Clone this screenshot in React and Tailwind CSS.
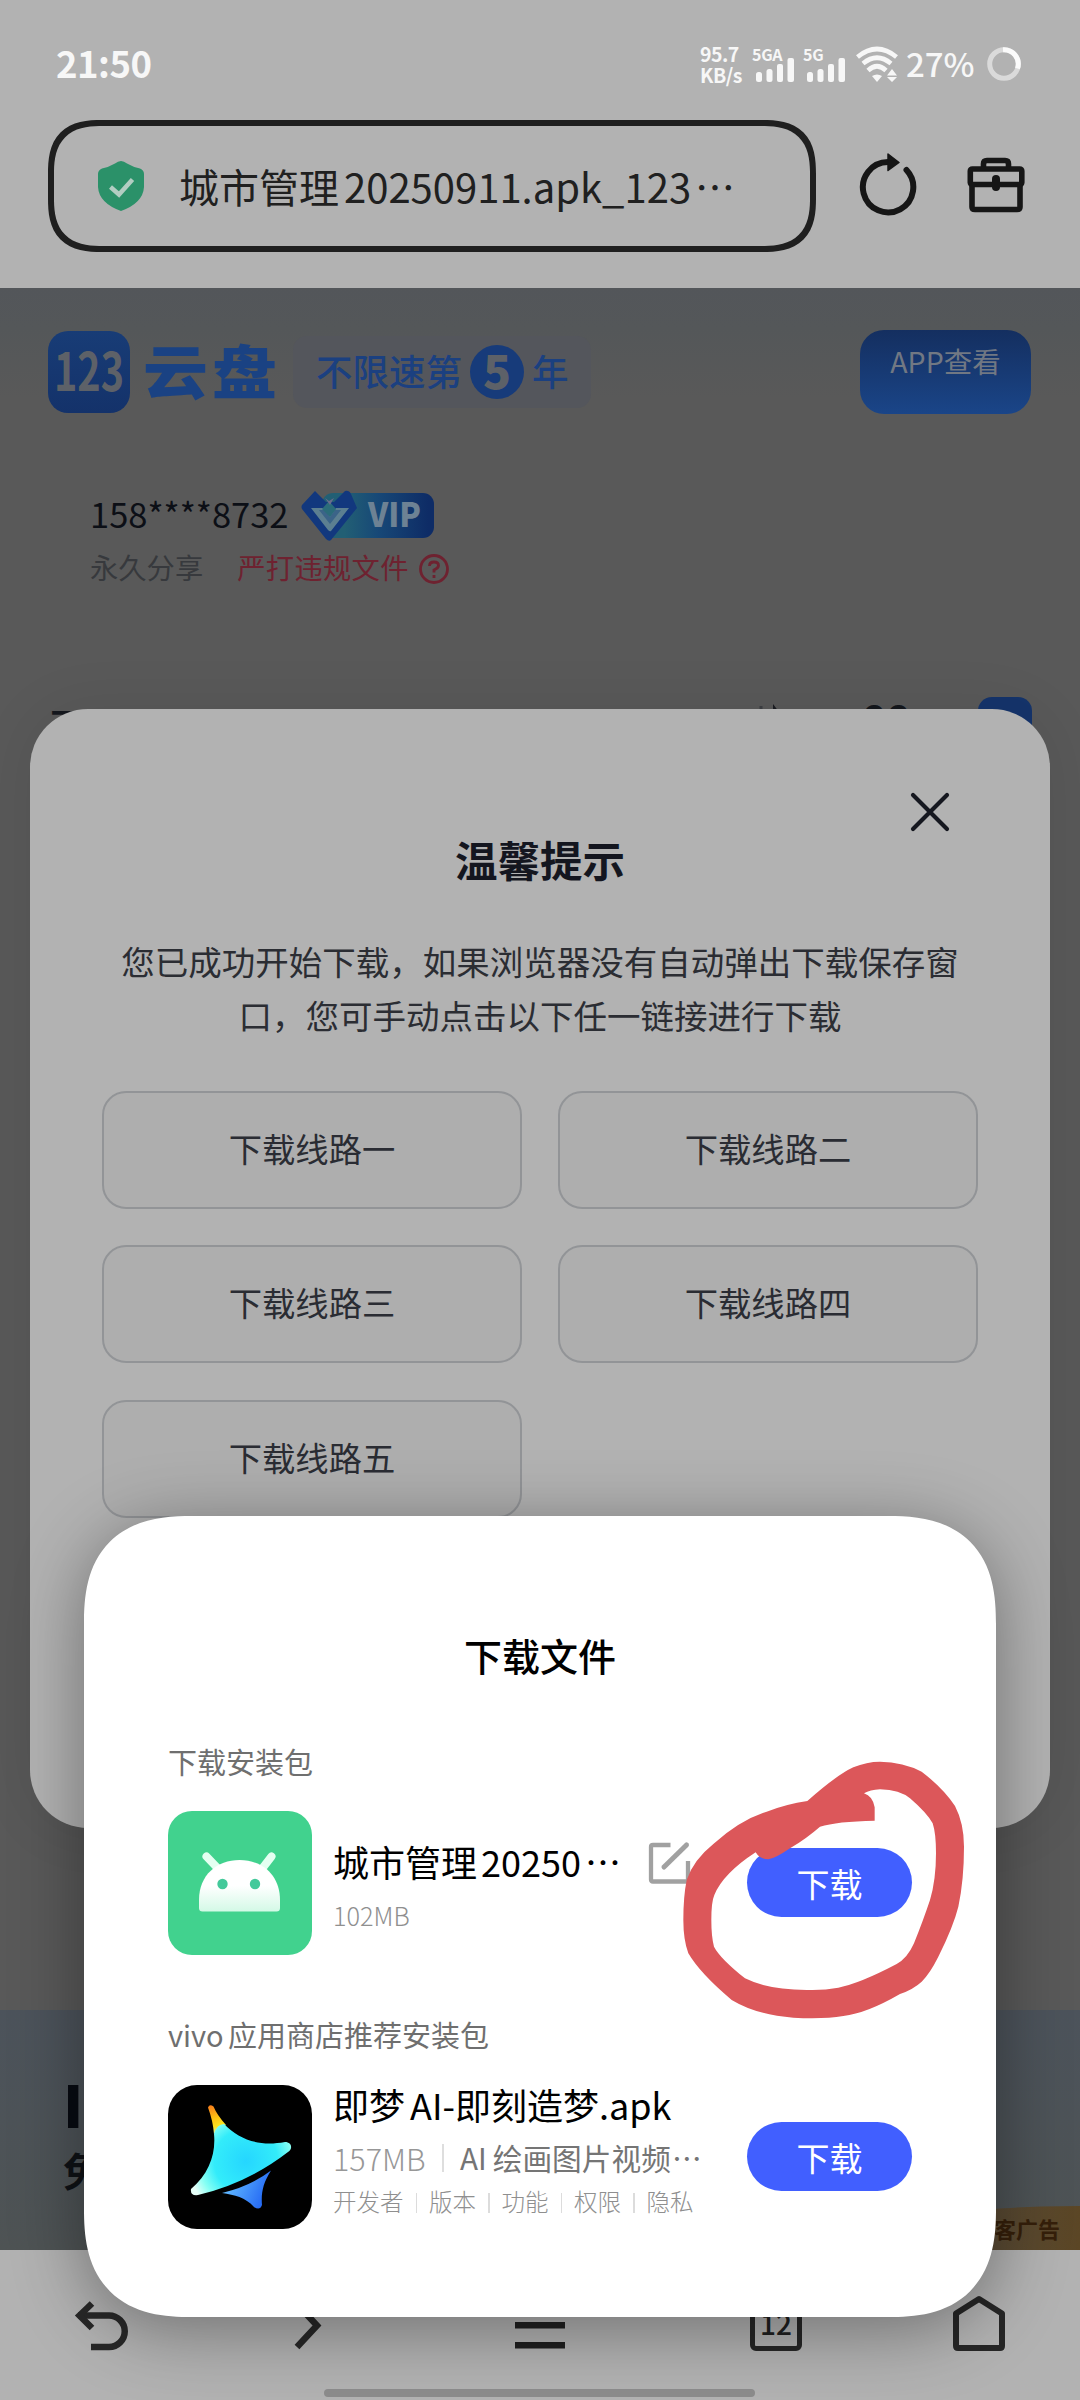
const ROUTES = ["下载线路一", "下载线路二", "下载线路三", "下载线路四", "下载线路五"];

const APP_LINKS = ["开发者", "版本", "功能", "权限", "隐私"];

function Signal({ label }) {
  return (
    <div className="w-[42px] h-[36px] relative">
      <span className="absolute -left-[2px] -top-px text-[16px] leading-[17px] font-bold tracking-[-0.3px] whitespace-nowrap">
        {label}
      </span>
      <svg className="absolute left-0 top-0" width="42" height="36" viewBox="0 0 42 36" fill="#f7f7f7">
        <rect x="2" y="25" width="6" height="10" rx="2.5" />
        <rect x="12.5" y="22" width="6" height="13" rx="2.5" />
        <rect x="23" y="17" width="6" height="18" rx="2" />
        <rect x="33.5" y="11" width="6.5" height="24" rx="2" />
      </svg>
    </div>
  );
}

function StatusBar() {
  return (
    <div className="h-[120px] pt-[42px] pl-[56px] flex items-start text-[#f7f7f7]">
      <div className="w-[644px] text-[36.500px] leading-[42px] font-bold tracking-[-0.5px]">21:50</div>
      <div className="w-[54px] text-[19.500px] leading-[21px] font-bold mt-px tracking-[-0.5px]">
        <div>95.7</div>
        <div>KB/s</div>
      </div>
      <div className="flex mt-[5px]">
        <Signal label="5GA" />
        <div className="w-[9px]" />
        <Signal label="5G" />
      </div>
      <svg className="ml-[9px] mt-[4px]" width="44" height="38" viewBox="0 0 44 38" fill="none" stroke="#f7f7f7" strokeWidth="4.6">
        <path d="M1.5 11 Q21 -5 40.500 11" />
        <path d="M7 17.500 Q21 6 35 17.500" />
        <path d="M12 24.500 Q21 16 30 24.500" />
        <path d="M16 30 Q21 27 26 30 L21 36Z" fill="#f7f7f7" stroke="none" />
        <path d="M36 23 l5 6.500 h-10z M36 36 l5 -5 h-10z" fill="#f7f7f7" stroke="none" />
      </svg>
      <div className="ml-[6px] w-[81px] text-[33px] leading-[42px] font-medium">27%</div>
      <svg className="mt-[5px]" width="34" height="34" viewBox="0 0 34 34" fill="none" strokeWidth="5">
        <circle cx="17" cy="17" r="14.300" stroke="#dadada" />
        <path d="M16 2.700 A14.300 14.300 0 0 1 30.500 21.500" stroke="#fbfbfb" />
      </svg>
    </div>
  );
}

function AddressRow() {
  return (
    <div className="h-[168px] pl-[48px] flex items-start">
      <div className="w-[768px] h-[132px] rounded-[54px] [corner-shape:superellipse(1.4)] border-6 border-[#1f1f1f] pl-[43px] flex items-center text-[#202020]">
        <svg width="48" height="52" viewBox="0 0 48 52">
          <path d="M24 1 Q27 1 30 3.500 Q36 7 43 8.500 Q47 10 47 14 V27 Q46 43 24 51 Q2 43 1 27 V14 Q1 10 5 8.500 Q12 7 18 3.500 Q21 1 24 1Z" fill="#2b9169" />
          <path d="M13.500 27 L22 34.500 L35.500 19.500" fill="none" stroke="#b2cdc2" strokeWidth="4.500" />
        </svg>
        <div className="ml-[34px] pb-px flex text-[40px] leading-[60px] whitespace-nowrap">
          <span>城市管理</span>
          <span className="ml-[5px]">20250911.apk_123</span>
          <span className="ml-[4px]">…</span>
        </div>
      </div>
      <svg className="ml-[42px] mt-[30px]" width="60" height="68" viewBox="0 0 60 68">
        <path d="M30 12 A25.200 25.200 0 1 0 48.500 20" fill="none" stroke="#161616" strokeWidth="6" strokeLinecap="round" />
        <path d="M30 4 L41 12.500 L30 20.500Z" fill="#161616" stroke="#161616" strokeWidth="1.500" strokeLinejoin="round" />
      </svg>
      <svg className="ml-[49px] mt-[36px]" width="58" height="58" viewBox="0 0 58 58" fill="none" stroke="#161616" strokeWidth="5.600" strokeLinejoin="round">
        <path d="M16.500 13 V8 Q16.500 4.500 20 4.500 H38 Q41.500 4.500 41.500 8 V13" />
        <rect x="3.300" y="13" width="51.500" height="15.500" rx="2" />
        <path d="M5 28 V51 Q5 53.500 8 53.500 H50 Q53 53.500 53 51 V28" />
        <path d="M29 23 V31" strokeWidth="8" strokeLinecap="round" />
      </svg>
    </div>
  );
}

function VipBadge() {
  return (
    <svg className="overflow-visible" width="136" height="54" viewBox="0 0 136 54">
      <defs>
        <linearGradient id="vip">
          <stop offset="0.2" stopColor="#225f74" />
          <stop offset="0.5" stopColor="#174877" />
          <stop offset="0.95" stopColor="#0e2c66" />
        </linearGradient>
      </defs>
      <rect x="22" y="4" width="112" height="45" rx="11" fill="url(#vip)" />
      <path d="M15 2 L26 13 H34 L45 2 Q49 1 51 5 L57 19 L31 51 Q29 53 26 50 L2 20 Q1 18 2 16Z" fill="#12387e" />
      <path d="M11 19 H24 L30 26 L36 19 H49 L31 42 Q30 43 28 41Z" fill="#5c7f91" />
      <path d="M19 21 H25 L30 28 L35 21 H41 L30 35Z" fill="#1a4a80" opacity=".5" />
      <path d="M22 20 L29 12 L36 20 L30 28Z" fill="#2b6c7a" />
      <path d="M25 9 L29 12 L34 9 L30 16Z" fill="#6a6c8c" />
      <text x="68" y="38" fontSize="33" fontWeight="900" fill="#6d8294" textLength="53" lengthAdjust="spacingAndGlyphs">
        VIP
      </text>
    </svg>
  );
}

function SitePage() {
  return (
    <div className="h-[1962px] flex flex-col bg-[#595959] bg-[linear-gradient(180deg,#53565a_0px,#545759_40px,#595959_110px)] overflow-hidden">
      <div className="mt-[42px] h-[84px] pl-[48px] flex items-center">
        <svg className="overflow-visible" width="82" height="82" viewBox="0 0 82 82">
          <defs>
            <linearGradient id="logo" x2="0" y2="1">
              <stop offset="0" stopColor="#183c76" />
              <stop offset="1" stopColor="#14326a" />
            </linearGradient>
          </defs>
          <rect width="82" height="82" rx="20" fill="url(#logo)" />
          <text x="6" y="60" fontSize="53" fontWeight="700" fill="#5d6168" textLength="70" lengthAdjust="spacingAndGlyphs">
            123
          </text>
        </svg>
        <div className="ml-[13px] w-[150px] text-[65px] leading-[70px] font-black tracking-[4px] text-[#1a4283] pb-[6px] scale-y-90">
          云盘
        </div>
        <div className="w-[298px] h-[72px] rounded-[14px] bg-[#54565c] pl-[23px] flex items-center text-[36.500px] leading-[60px] text-[#1b4080] font-medium whitespace-nowrap">
          <span className="pb-[2px]">不限速第</span>
          <span className="mx-[8px] size-[54px] rounded-full bg-[#173b7a] text-[#5d6168] text-[46px] leading-[49px] font-black text-center">
            5
          </span>
          <span className="pb-[2px]">年</span>
        </div>
        <div className="ml-[269px] w-[171px] h-[84px] rounded-[24px] bg-linear-to-b from-[#142f60] to-[#1a4588] text-center text-[28.500px] leading-[61px] text-[#717883]">
          APP查看
        </div>
      </div>

      <div className="mt-[73px] pl-[90px] flex items-center h-[56px]">
        <span className="text-[34.500px] leading-[50px] text-[#0c0f16] pb-[5px]">158****8732</span>
        <div className="ml-[12px] mt-[2px]">
          <VipBadge />
        </div>
      </div>
      <div className="mt-[4px] pl-[90px] flex items-center h-[40px] text-[28.300px] leading-[40px]">
        <span className="text-[#37393d]">永久分享</span>
        <span className="ml-[34px] text-[#6e2230] tracking-[0.3px]">严打违规文件</span>
        <svg className="ml-[9px] mt-[3px]" width="32" height="32" viewBox="0 0 32 32" fill="none" stroke="#6e2230" strokeWidth="2.800">
          <circle cx="16" cy="16" r="13.500" />
          <path d="M11.500 13 Q11.500 9 16 9 Q20.500 9 20.500 12.500 Q20.500 15 16 17 V19.500" />
          <path d="M16 22 V25" />
        </svg>
      </div>

      <div className="mt-[110px] h-[70px] pl-[50px] flex items-start text-[#14171d]">
        <span className="w-[704px] pt-[6px] text-[40px] leading-[44px] font-medium">可</span>
        <svg className="mt-[7px] w-[108px]" width="108" height="30" viewBox="0 0 108 30" fill="none" strokeWidth="3">
          <path d="M7 2 V28" stroke="#3d3f43" />
          <path d="M19 0 L28 12 H19Z" fill="#1a1c22" />
        </svg>
        <span className="w-[116px] text-[41px] leading-[42px] font-bold">88</span>
        <span className="size-[54px] rounded-[14px] bg-[#15346b]" />
      </div>

      <div className="mt-auto h-[240px] pl-[63px] relative flex flex-col overflow-hidden bg-linear-to-b from-[#4c535b] to-[#4e5354] text-[#080b12]">
        <div className="mt-[63px] text-[58px] leading-[60px] font-black">I</div>
        <div className="mt-[11px] text-[40px] leading-[52px] font-bold text-[#0f1216]">免费</div>
        <div className="absolute right-0 bottom-0 w-[200px] h-[44px] rounded-tl-[100%_30px] bg-linear-to-r from-[#564f45] to-[#5b4625] pr-[20px] text-right text-[22px] leading-[28px] pt-[8px] font-bold text-[#351f0a]">
          播客广告
        </div>
      </div>
    </div>
  );
}

function BottomNav() {
  return (
    <div className="h-[150px] relative bg-[#b2b2b2]">
      <div className="pt-[43px] pl-[72px] flex items-start">
        <svg width="62" height="66" viewBox="0 0 62 66" fill="none" stroke="#282828" strokeWidth="6.500">
          <path d="M6 22.500 H37 A15.700 15.700 0 0 1 37 54 H19" />
          <path d="M20 10.500 L7.500 22.500 L20 35" />
        </svg>
        <svg className="ml-[157px]" width="34" height="66" viewBox="0 0 34 66" fill="none" stroke="#282828" strokeWidth="6.500">
          <path d="M6 11 L26 32.500 L6 54" />
        </svg>
        <svg className="ml-[190px]" width="50" height="66" viewBox="0 0 50 66" stroke="#202020" strokeWidth="6.500">
          <path d="M0 12.500 H50 M0 32.300 H50 M0 52.200 H50" />
        </svg>
        <div className="ml-[185px] mt-[6px] w-[52px] h-[52px] rounded-[6px] border-[5.500px] border-[#262626] text-center text-[28px] leading-[38px] font-medium text-[#202020]">
          12
        </div>
        <svg className="ml-[150px] -mt-px" width="54" height="66" viewBox="0 0 54 66" fill="none" stroke="#262626" strokeWidth="6" strokeLinejoin="round">
          <path d="M27 7 L50 21.500 V54 Q50 56 48 56 H6 Q4 56 4 54 V21.500Z" />
        </svg>
      </div>
      <div className="absolute left-[324px] top-[139px] w-[431px] h-[8px] rounded-full bg-[#8c8c8c]" />
    </div>
  );
}

function TipsDialog() {
  return (
    <div className="absolute left-[30px] top-[709px] w-[1020px] h-[1119px] rounded-[58px] bg-[#b2b2b2] shadow-[0_0_60px_rgba(0,0,0,0.08)] px-[72px]">
      <svg className="ml-[807px] mt-[82px]" width="42" height="42" viewBox="0 0 42 42" stroke="#15171f" strokeWidth="4.200" strokeLinecap="round">
        <path d="M4 4 L38 38 M38 4 L4 38" />
      </svg>
      <h2 className="mt-px text-center text-[42.500px] leading-[50px] font-bold text-[#14161f]">温馨提示</h2>
      <p className="mt-[50px] text-center text-[33.500px] leading-[53.500px] text-[#2b2d33] whitespace-nowrap">
        您已成功开始下载，如果浏览器没有自动弹出下载保存窗
        <br />
        口，您可手动点击以下任一链接进行下载
      </p>
      <div className="mt-[50px] grid grid-cols-2 gap-x-[36px] gap-y-[36.300px]">
        {ROUTES.map((route) => (
          <button
            key={route}
            className="h-[118px] rounded-[24px] border-[2.500px] border-[#929497] bg-[#aeaeae] text-[33.300px] leading-[60px] text-[#2a2c33] pb-[4px]"
          >
            {route}
          </button>
        ))}
      </div>
    </div>
  );
}

function AndroidIcon() {
  return (
    <svg width="144" height="144" viewBox="0 0 144 144">
      <defs>
        <linearGradient id="droid" x2="0" y2="1">
          <stop offset="0.5" stopColor="#fff" />
          <stop offset="1" stopColor="#d3f9e6" />
        </linearGradient>
      </defs>
      <rect width="144" height="144" rx="24" fill="#41d28e" />
      <path d="M38.500 45.500 L49 56.500 M103.500 45.500 L95 56.500" stroke="#e4fff1" strokeWidth="8" strokeLinecap="round" />
      <path d="M31 97 V89 C31 64 49 49 71.500 49 C94 49 112 64 112 89 V97 Q112 100.500 108.500 100.500 H34.500 Q31 100.500 31 97Z" fill="url(#droid)" />
      <circle cx="54.500" cy="73" r="5.200" fill="#43c99a" />
      <circle cx="87" cy="73" r="5.200" fill="#43c99a" />
    </svg>
  );
}

function DreamIcon() {
  return (
    <svg width="144" height="144" viewBox="0 0 144 144">
      <defs>
        <linearGradient id="flame" x1="42" y1="20" x2="52" y2="50" gradientUnits="userSpaceOnUse">
          <stop offset="0" stopColor="#f47a1c" />
          <stop offset="0.45" stopColor="#ffc412" />
          <stop offset="0.7" stopColor="#fbe31f" />
          <stop offset="1" stopColor="#c9fbf0" />
        </linearGradient>
        <radialGradient id="glow" cx="78" cy="76" r="58" gradientUnits="userSpaceOnUse">
          <stop offset="0" stopColor="#25d6ff" />
          <stop offset="0.55" stopColor="#33ecfa" />
          <stop offset="0.8" stopColor="#86fff4" />
          <stop offset="1" stopColor="#e6fff8" />
        </radialGradient>
        <linearGradient id="fin" x1="60" y1="105" x2="95" y2="120" gradientUnits="userSpaceOnUse">
          <stop offset="0" stopColor="#5db4ff" />
          <stop offset="1" stopColor="#2468f4" />
        </linearGradient>
      </defs>
      <rect width="144" height="144" rx="29" fill="#000" />
      <path d="M40 22.500 Q41.500 18.500 45.500 21.500 Q49 30 58 40 L46 49 Q45 36 40 22.500Z" fill="url(#flame)" />
      <path d="M46 49 Q49 39 56 39 C71 54 90 62 117 57 C124 57 125 64 120 67 Q80 98 30 110 Q22 111 23 104 C41 89 48 69 46 49Z" fill="url(#glow)" />
      <path d="M54 108 Q83 101 103 85.500 C95 98 93 108 94 120 Q92 126 86 122 C77 112 67 110 54 108Z" fill="url(#fin)" />
    </svg>
  );
}

function DownloadButton() {
  return (
    <button className="w-[165px] h-[69px] rounded-full bg-[#415fff] text-white text-[33px] leading-[60px] pt-px">
      下载
    </button>
  );
}

function DownloadSheet() {
  return (
    <div className="absolute left-[84px] top-[1516px] w-[912px] h-[801px] rounded-[108px] [corner-shape:superellipse(1.34)] bg-white shadow-[0_12px_70px_rgba(0,0,0,0.38)] pl-[84px]">
      <h3 className="mt-[111px] pr-[84px] text-center text-[38px] leading-[56px] font-medium text-black">下载文件</h3>

      <p className="mt-[58px] text-[29px] leading-[40px] text-[#6f6f6f]">下载安装包</p>
      <div className="mt-[30px] h-[144px] flex items-start">
        <AndroidIcon />
        <div className="ml-[21px] w-[314px]">
          <div className="mt-[25px] flex text-[36px] leading-[50px] text-black whitespace-nowrap">
            <span>城市管理</span>
            <span className="ml-[4px]">20250</span>
            <span className="ml-[4px]">…</span>
          </div>
          <div className="mt-[11px] text-[25.300px] leading-[36px] font-light text-[#8f8f8f]">102MB</div>
        </div>
        <svg className="mt-[30px]" width="44" height="44" viewBox="0 0 44 44" fill="none" stroke="#a1a1a1" strokeWidth="4.300">
          <path d="M23.500 4 H6 Q4 4 4 6 V38.500 Q4 40.500 6 40.500 H39 Q41 40.500 41 38.500 V20" />
          <path d="M17 26 L39.500 4" strokeWidth="5" strokeLinecap="round" />
        </svg>
        <div className="ml-[56px] mt-[37px]">
          <DownloadButton />
        </div>
      </div>

      <p className="mt-[59px] flex text-[29px] leading-[40px] text-[#6f6f6f]">
        <span className="w-[60px]">vivo</span>
        <span>应用商店推荐安装包</span>
      </p>
      <div className="mt-[31px] h-[144px] flex items-start">
        <DreamIcon />
        <div className="ml-[21px] w-[414px] whitespace-nowrap">
          <div className="-mt-[6px] flex text-[36px] leading-[50px] text-black">
            <span>即梦</span>
            <span className="ml-[5px]">AI-即刻造梦.apk</span>
          </div>
          <div className="mt-[8px] h-[42px] flex items-center text-[29.700px] leading-[42px] text-[#757575]">
            <span className="w-[109px] text-[30.500px] font-light text-[#979797]">157MB</span>
            <span className="w-[2px] h-[28px] mr-[16px] bg-[#dedede]" />
            <span>AI</span>
            <span className="ml-[6px]">绘画图片视频</span>
            <span className="ml-px">…</span>
          </div>
          <div className="mt-[5px] flex items-center text-[23.500px] leading-[34px] font-light text-[#8f8f8f]">
            {APP_LINKS.map((name, i) => (
              <div key={name} className="flex items-center">
                {i > 0 && <span className="mx-[12px] mt-[3px] w-[1.500px] h-[20px] bg-[#dcdcdc]" />}
                {name}
              </div>
            ))}
          </div>
        </div>
        <div className="mt-[37px]">
          <DownloadButton />
        </div>
      </div>
    </div>
  );
}

// hand-drawn marker loop around the first download button
function MarkerLoop() {
  return (
    <svg className="absolute left-[560px] top-[1720px] pointer-events-none" width="520" height="320" viewBox="0 0 1560 960">
      <path
        fill="#dc575a"
        fillRule="evenodd"
        d="M742 243 Q830 165 880 142 Q920 125 960 125 Q1030 126 1085 155 Q1150 205 1185 258 Q1212 310 1212 380 Q1212 480 1195 560 Q1180 620 1135 710 Q1110 760 1085 785 Q1060 808 1020 822 Q920 880 850 888 Q790 898 700 893 Q590 885 515 840 Q420 760 385 700 Q370 660 370 600 Q370 530 380 480 Q400 420 460 372 Q540 300 620 275 Q680 252 742 243Z
        M944 302 L944 262 Q938 228 912 220 Q930 210 960 208 Q1020 210 1050 235 Q1100 278 1118 310 Q1128 340 1128 400 Q1128 480 1110 540 Q1090 600 1062 670 Q1042 715 1010 732 Q900 790 835 803 Q790 812 740 810 Q620 808 555 775 Q480 715 462 680 Q454 650 454 600 Q454 545 463 525 Q490 460 587 397 Q600 418 625 418 Q645 416 690 385 Q740 355 780 320 Q830 304 944 302Z"
      />
    </svg>
  );
}

export default function App() {
  return (
    <div
      lang="zh-CN"
      className="relative w-[1080px] h-[2400px] overflow-hidden bg-[#b2b2b2] font-['Noto_Sans_CJK_SC',sans-serif]"
    >
      <StatusBar />
      <AddressRow />
      <SitePage />
      <BottomNav />
      <TipsDialog />
      <DownloadSheet />
      <MarkerLoop />
    </div>
  );
}
